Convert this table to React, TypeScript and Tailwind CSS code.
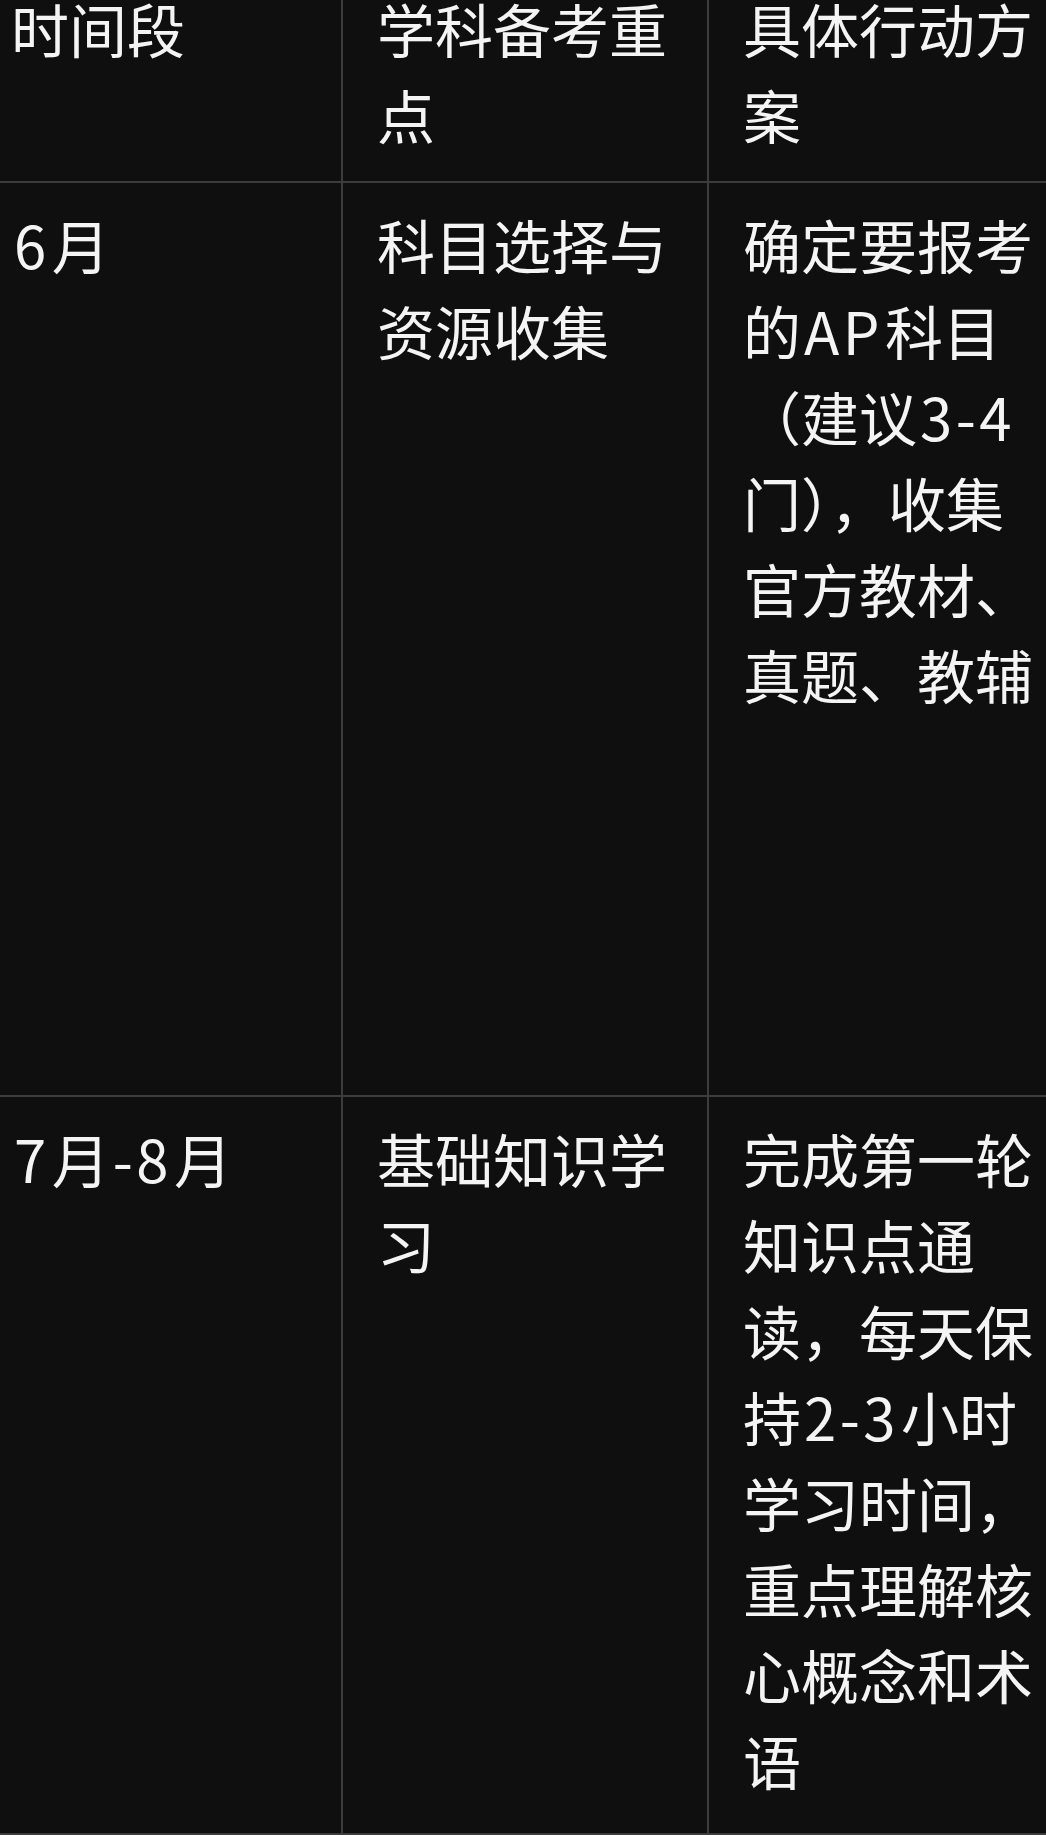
import React from 'react';

type Row = {
  period: string;
  focus: string;
  plan: string;
  height: string;
};

const header = { period: '时间段', focus: '学科备考重点', plan: '具体行动方案' };

const rows: Row[] = [
  {
    period: '6月',
    focus: '科目选择与资源收集',
    plan: '确定要报考的AP科目（建议3-4门），收集官方教材、真题、教辅',
    height: 'h-[914px]',
  },
  {
    period: '7月-8月',
    focus: '基础知识学习',
    plan: '完成第一轮知识点通读，每天保持2-3小时学习时间，重点理解核心概念和术语',
    height: 'h-[738px]',
  },
];

// latin runs sit a little looser next to CJK, like the source rendering
const Text: React.FC<{ value: string }> = ({ value }) => (
  <>
    {value.split(/([A-Za-z0-9-]+)/).map((part, i) =>
      /^[A-Za-z0-9-]+$/.test(part) ? (
        <span key={i} className="tracking-[0.06em] ml-[3px] mr-[2px]">
          {part}
        </span>
      ) : (
        <React.Fragment key={i}>{part}</React.Fragment>
      ),
    )}
  </>
);

const cellBase = 'pt-[18px] leading-[86px] text-[58px] text-[#f4f4f4]';

const TableRow: React.FC<{ period: string; focus: string; plan: string; height: string }> = ({
  period,
  focus,
  plan,
  height,
}) => (
  <div className={`grid grid-cols-[361px_366px_400px] border-b-2 border-[#3c3c3c] ${height}`}>
    <div className={`${cellBase} pl-[29px] pr-6 border-r-2 border-[#3c3c3c]`}>
      <Text value={period} />
    </div>
    <div className={`${cellBase} pl-[34px] pr-[30px] border-r-2 border-[#3c3c3c]`}>
      <Text value={focus} />
    </div>
    <div className={`${cellBase} pl-[34px] pr-[64px]`}>
      <Text value={plan} />
    </div>
  </div>
);

const App: React.FC = () => {
  return (
    <div
      className="w-[1046px] h-[1835px] overflow-hidden bg-[#0f0f0f]"
      style={{ fontFamily: '"Noto Sans CJK SC", "Noto Sans", sans-serif' }}
    >
      <div className="-ml-[18px] -mt-[33px] w-[1127px]">
        <TableRow {...header} height="h-[216px]" />
        {rows.map((r) => (
          <TableRow key={r.period} {...r} />
        ))}
      </div>
    </div>
  );
};

export default App;
